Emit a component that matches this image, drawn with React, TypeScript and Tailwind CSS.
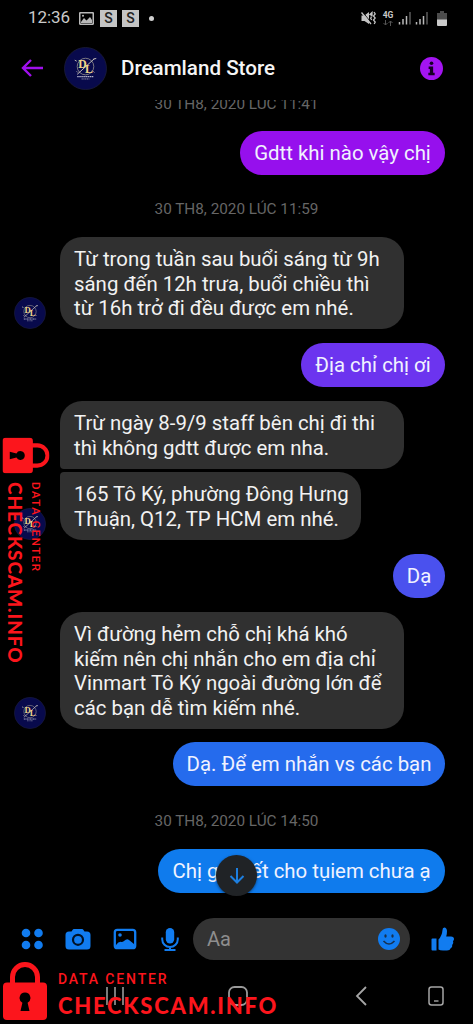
import React from 'react';

function Avatar({ className }: { className: string }) {
  return (
    <svg viewBox="0 0 44 44" className={className}>
      <circle cx="22" cy="22" r="21.500" fill="#080a4c" stroke="#1c1d3c" strokeWidth="0.8" />
      <circle cx="22" cy="20" r="8.500" fill="none" stroke="#9a9690" strokeWidth="0.8" />
      <path d="M13.500 28 31 12M11 13.500l2 1M30 12.500l3-.8M13 25l1 1M30 25l1 1" stroke="#d8d2c4" strokeWidth="0.9" fill="none" />
      <text x="14.500" y="21.500" fontSize="12" fontWeight="700" fill="#efd489" fontFamily="Liberation Serif, serif">D</text>
      <text x="21.500" y="26.500" fontSize="12" fontWeight="700" fill="#efd489" fontFamily="Liberation Serif, serif">L</text>
      <path d="M13.500 30.300h17" stroke="#b4b3c8" strokeWidth="1.300" strokeDasharray="1.600 .5" />
      <path d="M18 32.700h8" stroke="#8d8ca8" strokeWidth="1" strokeDasharray="1.300 .5" />
    </svg>
  );
}

function Received({ lines, width, first, last }: { lines: string[]; width: string; first?: boolean; last?: boolean }) {
  return (
    <div className="flex items-end">
      <div className="w-[60px] pl-[14px]">{last && <Avatar className="block size-8" />}</div>
      <div className={`${width} ${first ? 'rounded-t-[22px]' : 'rounded-tl-[4px] rounded-tr-[22px]'} ${last ? 'rounded-b-[22px]' : 'rounded-bl-[4px] rounded-br-[22px]'} bg-[#303030] pt-[10px] pb-[8.500px] pl-[14px] text-[20.400px] leading-[24.500px] text-[#f2f2f2]`}>
        {lines.map((l) => <div key={l} className="whitespace-nowrap">{l}</div>)}
      </div>
    </div>
  );
}

function Sent({ children, className }: { children: React.ReactNode; className: string }) {
  return (
    <div className={`${className} mr-7 flex h-11 shrink-0 items-center justify-center self-end rounded-full text-[20.400px] whitespace-nowrap text-[#f0f2ff]`}>
      {children}
    </div>
  );
}

function Stamp({ children, className }: { children: React.ReactNode; className: string }) {
  return <div className={`${className} flex shrink-0 items-center justify-center text-[15.300px] whitespace-nowrap text-[#666]`}>{children}</div>;
}

function Lock({ className }: { className: string }) {
  return (
    <svg viewBox="0 0 44 58" className={className}>
      <path d="M9.500 24V15a12.500 12.500 0 0 1 25 0v9" fill="none" stroke="#fc151c" strokeWidth="5" />
      <path fillRule="evenodd" fill="#fc151c" d="M4 20.500h36a4 4 0 0 1 4 4V54a4 4 0 0 1-4 4H4a4 4 0 0 1-4-4V24.500a4 4 0 0 1 4-4ZM22 30.500a5.500 5.500 0 0 0-2.600 10.300L17.500 49h9l-1.900-8.200A5.500 5.500 0 0 0 22 30.500Z" />
    </svg>
  );
}

function Signal() {
  return (
    <svg viewBox="0 0 14 14" className="h-3.5 w-3.5">
      <path d="M1.500 11v2.500M5 8v5.500M8.500 5v8.500" stroke="#b9b9b9" strokeWidth="1.500" />
      <path d="M12 1v12.500" stroke="#5b5b5b" strokeWidth="1.500" />
    </svg>
  );
}

export default function App() {
  return (
    <div className="relative flex h-[1024px] w-[473px] flex-col overflow-hidden bg-black font-['Roboto',sans-serif]">
      <div className="flex h-9 shrink-0 items-center pl-7 pr-[25px] text-[#c9c9c9]">
        <div className="w-[51px] text-[17px] tracking-[-0.1px]">12:36</div>
        <svg viewBox="0 0 15 13" className="h-[13px] w-[15px]">
          <rect x="0.700" y="0.700" width="13.600" height="11.600" rx="1" fill="none" stroke="#b9b9b9" strokeWidth="1.600" />
          <path d="m2 10 3-4 2.500 2.500L11 5l2 3v3H2Z" fill="#b9b9b9" />
          <circle cx="4" cy="3.800" r="1" fill="#b9b9b9" />
        </svg>
        <div className="ml-1.5 flex gap-[5px]">
          <div className="flex h-[17px] w-[17px] items-center justify-center bg-[#c4c4c4] text-[14px] font-medium text-[#222]">S</div>
          <div className="flex h-[17px] w-[17px] items-center justify-center bg-[#c4c4c4] text-[14px] font-medium text-[#222]">S</div>
        </div>
        <div className="ml-[10px] size-[5px] rounded-full bg-[#d0d0d0]" />
        <div className="ml-auto flex items-center">
          <svg viewBox="0 0 15 14" className="mr-[2px] h-3.5 w-[15px]">
            <path d="M.5 4.500h3L8 1v12L3.500 10h-3Z" fill="#c4c4c4" />
            <path d="m1 .5 10 12" stroke="#000" strokeWidth="1" />
            <path d="m.5 1.500 9.500 11.500M9 3.500l2-2v3Z" stroke="#c4c4c4" strokeWidth="1.300" fill="#c4c4c4" />
            <path d="m13 1 1.200 2-1.700 2 1.700 2-1.700 2 1.700 2-1 2M10.500 5.500l-.8 2 1 1.500" fill="none" stroke="#c4c4c4" strokeWidth="1.300" />
          </svg>
          <div className="ml-[4px] flex w-3 flex-col items-center">
            <span className="text-[8.500px] leading-[8px] font-bold">4G</span>
            <svg viewBox="0 0 10 6" className="mt-px h-1.5 w-2.5">
              <path d="M2.500 0v5M.5 3l2 2 2-2M7.500 6V1M5.500 3l2-2 2 2" fill="none" stroke="#555" />
            </svg>
          </div>
          <div className="ml-[4px] flex gap-[3px]"><Signal /><Signal /></div>
          <svg viewBox="0 0 10 15" className="mr-[1px] ml-[8px] h-[15px] w-2.5">
            <path d="M3 0h4v2h3v7H0V2h3Z" fill="#4b4b4b" />
            <path d="M0 8.500h10V14a1 1 0 0 1-1 1H1a1 1 0 0 1-1-1Z" fill="#cacaca" />
          </svg>
        </div>
      </div>

      <header className="flex h-16 shrink-0 items-center pr-[30px] pl-[21px]">
        <svg viewBox="0 0 22 18" className="h-[18px] w-[22px]">
          <path d="M22 9H2M10 1 2 9l8 8" fill="none" stroke="#a010ed" strokeWidth="2.400" />
        </svg>
        <Avatar className="ml-[21px] size-[43px]" />
        <h1 className="ml-[14px] text-[20.600px] font-medium whitespace-nowrap text-[#f5f5f5]">Dreamland Store</h1>
        <svg viewBox="0 0 24 24" className="ml-auto size-[23px]">
          <circle cx="12" cy="12" r="12" fill="#a414f2" />
          <circle cx="12" cy="6.500" r="1.900" fill="#160025" />
          <path d="M9 10h4.700v6.500h1.600V19H8.700v-2.500h1.600v-4H9Z" fill="#160025" />
        </svg>
      </header>

      <main className="relative flex h-[804px] shrink-0 flex-col overflow-hidden">
        <Stamp className="-mt-[6px] h-5">30 TH8, 2020 LÚC 11:41</Stamp>
        <Sent className="mt-[17px] w-[205px] bg-[#9610ed]">Gdtt khi nào vậy chị</Sent>
        <Stamp className="mt-6 h-5">30 TH8, 2020 LÚC 11:59</Stamp>
        <div className="mt-[18px]">
          <Received first last width="w-[344px]" lines={['Từ trong tuần sau buổi sáng từ 9h', 'sáng đến 12h trưa, buổi chiều thì', 'từ 16h trở đi đều được em nhé.']} />
        </div>
        <Sent className="mt-[14px] w-[144px] bg-[#6c34ef]">Địa chỉ chị ơi</Sent>
        <div className="mt-[14px] flex flex-col gap-[3.500px]">
          <Received first width="w-[344px]" lines={['Trừ ngày 8-9/9 staff bên chị đi thi', 'thì không gdtt được em nha.']} />
          <Received last width="w-[301px]" lines={['165 Tô Ký, phường Đông Hưng', 'Thuận, Q12, TP HCM em nhé.']} />
        </div>
        <Sent className="mt-[14.500px] w-[52px] bg-[#4a51ee]">Dạ</Sent>
        <div className="mt-[14px]">
          <Received first last width="w-[344px]" lines={['Vì đường hẻm chỗ chị khá khó', 'kiếm nên chị nhắn cho em địa chỉ', 'Vinmart Tô Ký ngoài đường lớn để', 'các bạn dễ tìm kiếm nhé.']} />
        </div>
        <Sent className="mt-[13.500px] w-[272px] bg-[#256bed]">Dạ. Để em nhắn vs các bạn</Sent>
        <Stamp className="mt-[25px] h-5">30 TH8, 2020 LÚC 14:50</Stamp>
        <Sent className="mt-[18px] w-[287px] bg-[#0f7bed]">Chị gửi kết cho tụiem chưa ạ</Sent>
        <div className="absolute top-[755px] left-[216px] flex size-[41px] items-center justify-center rounded-full bg-[#202326] shadow-[0_1px_3px_rgba(0,0,0,0.5)]">
          <svg viewBox="0 0 16 17" className="h-[17px] w-4">
            <path d="M8 1v14M1.500 9 8 15.500 14.500 9" fill="none" stroke="#1d7fe0" strokeWidth="2" />
          </svg>
        </div>
      </main>

      <div className="flex h-[70px] shrink-0 items-center pr-[18px] pl-[21px]">
        <svg viewBox="0 0 22 22" className="size-[22px]" fill="#117cf0">
          <circle cx="5" cy="5" r="4.300" /><circle cx="17.500" cy="5" r="4.300" />
          <circle cx="5" cy="17" r="4.300" /><circle cx="17.500" cy="17" r="4.300" />
        </svg>
        <svg viewBox="0 0 26 22" className="ml-[22px] h-[22px] w-[26px]">
          <path d="M9 1h8q1 0 1.500 1l1 1.500H22a3.500 3.500 0 0 1 3.500 3.500v11a3.500 3.500 0 0 1-3.500 3.500H4A3.500 3.500 0 0 1 .5 18V7A3.500 3.500 0 0 1 4 3.500h2.500l1-1.500Q8 1 9 1Z" fill="#117cf0" />
          <circle cx="13" cy="11.800" r="5" fill="none" stroke="#001226" strokeWidth="2.200" />
        </svg>
        <svg viewBox="0 0 24 22" className="ml-[22px] h-[22px] w-6">
          <rect x="1.800" y="1.800" width="20.400" height="18.400" rx="2.500" fill="none" stroke="#117cf0" strokeWidth="2.300" />
          <circle cx="7" cy="7" r="1.800" fill="#117cf0" />
          <path d="M3 17q3-4 5.500-3 1.500 0 2.500-1 3-3 5-1l5 4v4H3Z" fill="#117cf0" />
        </svg>
        <svg viewBox="0 0 18 23" className="ml-[24px] h-[23px] w-[18px]">
          <rect x="4.800" y="0" width="8.400" height="15.500" rx="4.200" fill="#117cf0" />
          <path d="M1.200 9.500v1.800a7.800 7.800 0 0 0 15.600 0V9.500M9 19v3M3.500 22h11" fill="none" stroke="#117cf0" strokeWidth="2" />
        </svg>
        <div className="ml-[14px] flex h-[42px] w-[217px] items-center justify-between rounded-full bg-[#333] pr-[10px] pl-[14px]">
          <span className="text-[20px] text-[#8e8e8e]">Aa</span>
          <svg viewBox="0 0 22 22" className="size-[22px]">
            <circle cx="11" cy="11" r="11" fill="#117cf0" />
            <ellipse cx="7.500" cy="8" rx="1.200" ry="1.700" fill="#17304e" /><ellipse cx="14.500" cy="8" rx="1.200" ry="1.700" fill="#17304e" />
            <path d="M5.500 13q5.500 6 11 0" fill="none" stroke="#17304e" strokeWidth="1.600" />
          </svg>
        </div>
        <svg viewBox="0 0 24 24" className="ml-auto size-6" fill="#117cf0">
          <path d="M1.500 11.500h4v12h-4q-1 0-1-1v-10q0-1 1-1ZM7.500 12.500Q11 9 11.500 3q0-2.500 1.800-2.500 2.400 0 2.700 3.500 0 3-.8 5.500H20q3 .2 3 2.500 0 1.300-1 2 1 2.500-.8 4 .5 2.500-1.500 3.300Q19 23.500 16 23.500h-4q-3 0-4.500-1Z" />
        </svg>
      </div>

      <nav className="flex h-11 shrink-0 items-center pb-[1px] pl-[106px]">
        <svg viewBox="0 0 18 20" className="h-5 w-[18px]"><path d="M1 1v18M9 1v18M17 1v18" stroke="#9a9a9a" strokeWidth="1.600" /></svg>
        <svg viewBox="0 0 20 20" className="ml-[104px] size-5"><rect x="1" y="1" width="18" height="18" rx="5.500" fill="none" stroke="#9a9a9a" strokeWidth="1.800" /></svg>
        <svg viewBox="0 0 12 20" className="ml-[107px] h-5 w-3"><path d="m11 1-9 9 9 9" fill="none" stroke="#a5a5a5" strokeWidth="1.800" /></svg>
        <svg viewBox="0 0 16 20" className="ml-[61px] h-5 w-4"><rect x="1" y="1" width="14" height="18" rx="2.500" fill="none" stroke="#a5a5a5" strokeWidth="1.500" /><path d="M6 15h4.500" stroke="#a5a5a5" strokeWidth="1.400" /></svg>
      </nav>

      <div className="absolute top-[962px] left-[3px] flex text-[#fc151c]">
        <Lock className="h-[58px] w-11" />
        <div className="ml-[11px] whitespace-nowrap">
          <div className="mt-[10px] text-[14px] leading-[15px] font-medium tracking-[1.850px]">DATA CENTER</div>
          <div className="mt-[7px] font-['Lato',sans-serif] text-[22px] leading-[24px] font-black tracking-[1.750px]">CHECKSCAM.INFO</div>
        </div>
      </div>

      <div className="absolute top-[437px] left-[2px] flex w-[47px] flex-col text-[#fc151c]">
        <div className="flex h-9 w-[47px] items-center justify-center">
          <Lock className="h-[47px] w-9 shrink-0 rotate-90" />
        </div>
        <div className="mt-[9px] flex flex-row-reverse items-start justify-end whitespace-nowrap">
          <div className="ml-[4px] text-[11.500px] leading-[14px] font-medium tracking-[1.500px] [writing-mode:vertical-rl]">DATA CENTER</div>
          <div className="ml-[3px] font-['Lato',sans-serif] text-[19px] leading-[20px] font-black tracking-[0.900px] [writing-mode:vertical-rl]">CHECKSCAM.INFO</div>
        </div>
      </div>
    </div>
  );
}
